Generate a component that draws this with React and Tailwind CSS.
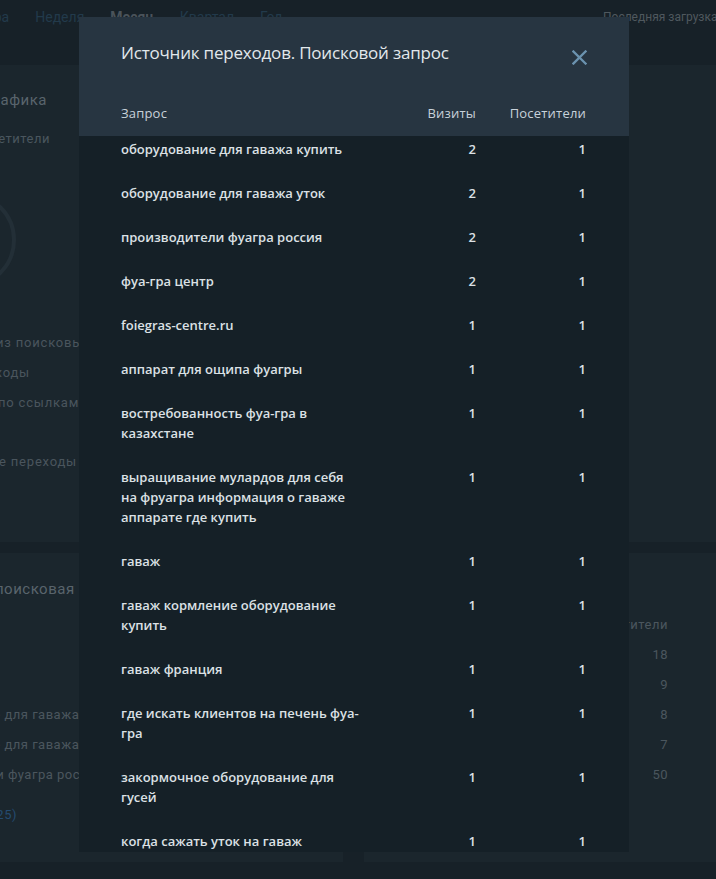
import React from "react";

const rows = [
  { q: "оборудование для гаважа купить", v: 2, u: 1 },
  { q: "оборудование для гаважа уток", v: 2, u: 1 },
  { q: "производители фуагра россия", v: 2, u: 1 },
  { q: "фуа-гра центр", v: 2, u: 1 },
  { q: "foiegras-centre.ru", v: 1, u: 1 },
  { q: "аппарат для ощипа фуагры", v: 1, u: 1 },
  { q: "востребованность фуа-гра в казахстане", v: 1, u: 1 },
  { q: "выращивание мулардов для себя на фруагра информация о гаваже аппарате где купить", v: 1, u: 1 },
  { q: "гаваж", v: 1, u: 1 },
  { q: "гаваж кормление оборудование купить", v: 1, u: 1 },
  { q: "гаваж франция", v: 1, u: 1 },
  { q: "где искать клиентов на печень фуа-гра", v: 1, u: 1 },
  { q: "закормочное оборудование для гусей", v: 1, u: 1 },
  { q: "когда сажать уток на гаваж", v: 1, u: 1 },
  { q: "купить аппарат для гаважа", v: 1, u: 1 },
  { q: "мулард на фуа-гра", v: 1, u: 1 },
];

// text that ends at a given x, overflowing off the left edge of the page
function EndAt({ w, className, children }) {
  return (
    <div className={"flex justify-end whitespace-nowrap " + (w || "")}>
      <span className={className}>{children}</span>
    </div>
  );
}

function Background() {
  return (
    <div className="flex flex-col h-full text-[#4b565e]">
      {/* top nav */}
      <div className="h-[65px] flex items-start pt-[8px]">
        <div className="flex gap-[26px] text-[14px] leading-[18px] -ml-[30px] text-[#223a4b]">
          <span>Вчера</span>
          <span>Неделя</span>
          <span className="font-bold text-[#4a535a]">Месяц</span>
          <span>Квартал</span>
          <span>Год</span>
        </div>
        <div className="ml-auto w-[113px] shrink-0 text-[12px] leading-[18px] text-[#4f585e] whitespace-nowrap">
          Последняя загрузка данных
        </div>
      </div>

      {/* traffic sources card */}
      <div className="h-[477px] bg-[#1b262d] overflow-hidden">
        <div className="pt-[25px]">
          <EndAt w="w-[47px]" className="text-[15px] leading-[20px] text-[#59646c] tracking-[0.5px]">
            Источники трафика
          </EndAt>
          <div className="h-[20px]" />
          <EndAt w="w-[50px]" className="text-[13px] leading-[18px] text-[#4a565e] tracking-[0.5px]">
            Посетители
          </EndAt>
          <div className="h-[44px]" />
          <div className="w-[96px] -ml-[80px] h-[96px] rounded-full border-[4px] border-[#232f37]" />
          <div className="h-[40px]" />
          <div className="flex flex-col text-[13px] leading-[30px] tracking-[0.8px] text-[#4a555d]">
            <span className="-ml-[76px] whitespace-nowrap">Переходы из поисковых систем</span>
            <EndAt w="w-[30px]">Прямые заходы</EndAt>
            <span className="-ml-[74px] whitespace-nowrap">Переходы по ссылкам на сайтах</span>
            <span className="h-[29px]" />
            <EndAt w="w-[77px]">Внутренние переходы</EndAt>
          </div>
        </div>
      </div>

      <div className="h-[11px]" />

      {/* bottom cards */}
      <div className="flex gap-[21px] h-[309px]">
        <div className="w-[343px] bg-[#1b262d] pt-[26px] text-[13px] tracking-[0.5px]">
          <span className="block -ml-[85px] whitespace-nowrap text-[15px] leading-[20px] text-[#59646c]">
            Источник: поисковая система
          </span>
          <div className="h-[101px]" />
          <div className="flex flex-col leading-[30px]">
            <span className="-ml-[92px] whitespace-nowrap">оборудование для гаважа купить</span>
            <span className="-ml-[92px] whitespace-nowrap">оборудование для гаважа уток</span>
            <span className="-ml-[96px] whitespace-nowrap">производители фуагра россия</span>
          </div>
          <div className="h-[10px]" />
          <EndAt w="w-[17px]" className="leading-[30px] text-[#244b70]">
            Все запросы (25)
          </EndAt>
        </div>
        <div className="flex-1 bg-[#1b262d] pt-[57px] pr-[48px] text-[13px] leading-[30px] tracking-[0.5px]">
          <div className="flex flex-col items-end">
            <span>Посетители</span>
            <span>18</span>
            <span>9</span>
            <span>8</span>
            <span>7</span>
            <span>50</span>
          </div>
        </div>
      </div>
    </div>
  );
}

function CloseIcon() {
  return (
    <svg width="15" height="15" viewBox="0 0 15 15" fill="none">
      <path d="M1.5 1.5 L13.5 13.5 M13.5 1.5 L1.5 13.5" stroke="#6b93af" strokeWidth="2.3" strokeLinecap="square" />
    </svg>
  );
}

export default function App() {
  return (
    <div className="relative h-[879px] overflow-hidden bg-[#172128] font-['Roboto',sans-serif]">
      <Background />

      <div className="absolute left-[79px] top-[17px] w-[550px] h-[835px] bg-[#152027] flex flex-col overflow-hidden">
        <div className="bg-[#273541] h-[119px] px-[42px] flex flex-col">
          <div className="flex items-center justify-between pt-[24px]">
            <h2 className="text-[17px] leading-[24px] text-[#e2e8ec] font-['Open_Sans',sans-serif] tracking-[-0.2px]">
              Источник переходов. Поисковой запрос
            </h2>
            <button className="mt-[8px] block">
              <CloseIcon />
            </button>
          </div>
          <div className="mt-auto pb-[14px] grid grid-cols-[240px_115px_110px] text-[13px] leading-[18px] text-[#c8d2da] font-['Open_Sans',sans-serif] tracking-[0.2px]">
            <span>Запрос</span>
            <span className="text-right">Визиты</span>
            <span className="text-right">Посетители</span>
          </div>
        </div>

        <div className="flex-1 overflow-hidden px-[42px]">
          <div className="-mt-[9px]">
            {rows.map((r) => (
              <div
                key={r.q}
                className="grid grid-cols-[240px_115px_110px] py-[12px] text-[13px] leading-[20px] font-semibold text-[#dce1e5] font-['Open_Sans',sans-serif]"
              >
                <span>{r.q}</span>
                <span className="text-right">{r.v}</span>
                <span className="text-right">{r.u}</span>
              </div>
            ))}
          </div>
        </div>
      </div>
    </div>
  );
}
